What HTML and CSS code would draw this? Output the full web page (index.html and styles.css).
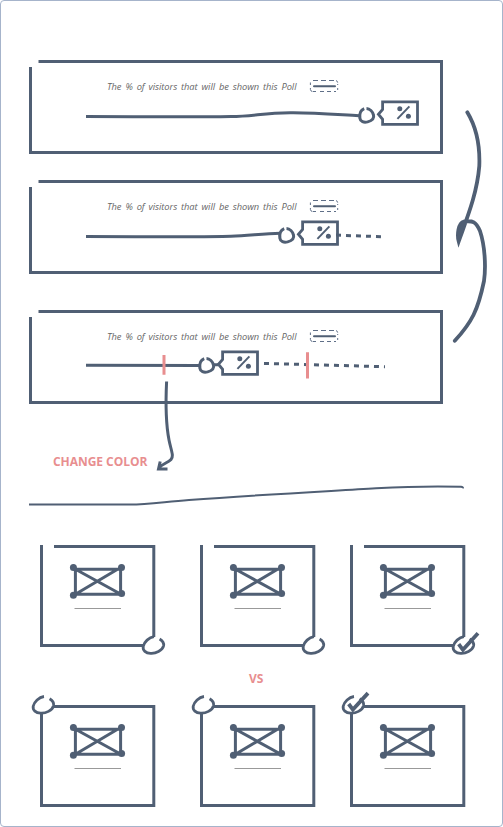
FILE: index.html
```html
<!DOCTYPE html>
<html lang="en">
<head>
<meta charset="utf-8">
<title>Poll visitor slider sketches</title>
<link rel="stylesheet" href="styles.css">
</head>
<body>
<svg class="defs" aria-hidden="true">
  <symbol id="frame" viewBox="0 0 414 94">
    <path class="ink" d="M9.5 1.5H412.5V92.5H1.5V7"/>
  </symbol>
  <symbol id="pill" viewBox="0 0 30 14">
    <path class="pill-dash" d="M4 1.5h5M12 1.5h5M20 1.5h5M4 12.5h3M11 12.5h4M18 12.5h4M25 12.5h2M27 1.6q1.5.3 1.7 2M1.4 3.5v2.5M1.4 9v1.5q.2 1.8 2 2M28.7 5v1M28.7 9v2"/>
    <path class="ink pill-bar" d="M5 7.2H26"/>
  </symbol>
  <symbol id="knob" viewBox="0 0 60 32">
    <path class="ink" d="M5.8 5.6C1.8 7.2 1 11.5 1.5 15.2C2 18.8 5.4 19.7 9.2 18.9C13.2 17.8 16 15.4 15.1 12C14.2 8.9 11.4 5.7 8.1 5.6"/>
    <path class="ink tag" d="M24.2 -1.2H59.1V21.4H24.2V16.3L20 11.2L24.2 6.5Z"/>
    <path class="ink slash" d="M39 15.9L51 3.4"/>
    <circle class="fill" cx="41.4" cy="5.8" r="2.5"/><circle class="fill" cx="50" cy="13.2" r="2.5"/>
  </symbol>
  <symbol id="thumb" viewBox="0 0 56 46">
    <path class="ink" d="M7.4 6.3H52.6V31.3H7.4ZM7 6L52.5 31M7.4 31.3L50 6"/>
    <g class="fill"><circle cx="5.4" cy="4.4" r="3.5"/><circle cx="53.5" cy="4.6" r="3.5"/><circle cx="5.4" cy="32.3" r="3.5"/><circle cx="53.6" cy="30.6" r="3.5"/></g>
    <path class="rule" d="M6.5 45.5H53"/>
  </symbol>
  <symbol id="ring" viewBox="0 0 24 20">
    <path class="ink loop" d="M12.5 1.2C7.5 1.8 2.6 6.5 1.7 11C1.1 15 4.3 17.7 9 17.8C14 18.2 21 15.3 22.1 10.3C22.7 7 20.6 5 18.1 3.5"/>
  </symbol>
  <symbol id="tick" viewBox="0 0 24 20">
    <path class="ink mark" d="M7.2 8.7L11.4 14.3L26.5 -2.2"/>
  </symbol>
</svg>

<main class="board">
  <section class="sliders">
    <article class="slider">
      <svg class="frame"><use href="#frame"/></svg>
      <div class="caption">
        <svg class="label" viewBox="0 0 190 16"><text x="0" y="11" textLength="189.5">The % of visitors that will be shown this Poll</text></svg>
        <svg class="pill"><use href="#pill"/></svg>
      </div>
      <svg class="track" viewBox="0 0 340 34">
        <path class="ink" d="M0 15.5C50 15.5 115 16.3 145 15.6C168 15 178 12.1 204 11.8C227 11.5 250 13.5 273 14.8"/>
        <use href="#knob" x="272.4" y="2" width="60" height="32"/>
      </svg>
    </article>
    <article class="slider">
      <svg class="frame"><use href="#frame"/></svg>
      <div class="caption">
        <svg class="label" viewBox="0 0 190 16"><text x="0" y="11" textLength="189.5">The % of visitors that will be shown this Poll</text></svg>
        <svg class="pill"><use href="#pill"/></svg>
      </div>
      <svg class="track" viewBox="0 0 340 34">
        <path class="ink" d="M0 15.5C50 15.5 115 16.3 145 15.3C164 14.5 178 12.4 194 12.2"/>
        <path class="ink dashes" d="M250 14.1L295 15.7"/>
        <use href="#knob" x="192.4" y="2" width="60" height="32"/>
      </svg>
    </article>
    <article class="slider">
      <svg class="frame"><use href="#frame"/></svg>
      <div class="caption">
        <svg class="label" viewBox="0 0 190 16"><text x="0" y="11" textLength="189.5">The % of visitors that will be shown this Poll</text></svg>
        <svg class="pill"><use href="#pill"/></svg>
      </div>
      <svg class="track" viewBox="0 0 340 34">
        <path class="ink" d="M0 14.2L113 14.6M127 13.7H132"/>
        <path class="ink dashes" d="M178 12.4L299 15.7"/>
        <use href="#knob" x="112.4" y="2" width="60" height="32"/>
        <path class="limit" d="M78 4V23.7M221.5 1.2V27.5"/>
      </svg>
    </article>
  </section>

  <p class="note">CHANGE COLOR</p>
  <svg class="divider" viewBox="0 0 436 22"><path class="ink thin" d="M0 19.5H101C119 19.5 134 17 160 15C230 9.8 300 6.2 347 3.3C380 1.5 404 1 432 1.8Q434.2 2 434 3.3"/></svg>

  <section class="tiles">
    <svg class="tile" viewBox="0 0 116 104">
      <path class="ink" d="M14 1.5H113.8V92M104 100.5H1.5V0"/><use href="#thumb" x="28" y="18" width="56" height="46"/><use href="#ring" x="101.5" y="90.5" width="24" height="20"/>
    </svg>
    <svg class="tile" viewBox="0 0 116 104">
      <path class="ink" d="M14 1.5H113.8V92M104 100.5H1.5V0"/><use href="#thumb" x="28" y="18" width="56" height="46"/><use href="#ring" x="101.5" y="90.5" width="24" height="20"/>
    </svg>
    <svg class="tile" viewBox="0 0 116 104">
      <path class="ink" d="M14 1.5H113.8V92M104 100.5H1.5V0"/><use href="#thumb" x="28" y="18" width="56" height="46"/><use href="#ring" x="101.5" y="90.5" width="24" height="20"/><use href="#tick" x="101.5" y="90.5" width="24" height="20"/>
    </svg>
  </section>
  <p class="versus">VS</p>
  <section class="tiles">
    <svg class="tile" viewBox="0 0 116 104">
      <path class="ink" d="M14 1.5H113.8V100.5H1.5V8"/><use href="#thumb" x="28" y="18" width="56" height="46"/><use href="#ring" x="-8.5" y="-9.7" width="24" height="20"/>
    </svg>
    <svg class="tile" viewBox="0 0 116 104">
      <path class="ink" d="M14 1.5H113.8V100.5H1.5V8"/><use href="#thumb" x="28" y="18" width="56" height="46"/><use href="#ring" x="-8.5" y="-9.7" width="24" height="20"/>
    </svg>
    <svg class="tile" viewBox="0 0 116 104">
      <path class="ink" d="M14 1.5H113.8V100.5H1.5V8"/><use href="#thumb" x="28" y="18" width="56" height="46"/><use href="#ring" x="-8.5" y="-9.7" width="24" height="20"/><use href="#tick" x="-8.5" y="-9.7" width="24" height="20"/>
    </svg>
  </section>

  <svg class="connectors" viewBox="0 0 503 827">
    <path class="ink thick" d="M467.3 112.3C478 130 480 148 479.3 166C477 194 467 218 458.7 241.3C457 235 458 223 464 221.5C473 220.5 476 221.5 480 231C485 246 486 267 484 281C478 310 472 322 454.8 340.8"/>
    <path class="fill" d="M458.7 241L458.7 229L463 222H467Z"/>
    <path class="ink" d="M166.6 381.5C165.7 400 165.5 422 169 440C171.5 452 174 456 171 459.5C168 463 162 463.5 158.5 468.5M160.2 461.5L158.5 469H167.5"/>
  </svg>
</main>
</body>
</html>
```
FILE: styles.css
```css
* { box-sizing: border-box; }
body { margin: 0; background: #fff; }
svg { display: block; overflow: visible; }
symbol { overflow: visible; }
.defs { position: absolute; width: 0; height: 0; }

.board {
  position: relative;
  width: 503px;
  height: 827px;
  padding: 59px 0 0 28px;
  border: 1px solid #a6b4cb;
  border-radius: 4px;
  overflow: hidden;
}

.ink { fill: none; stroke: #505f74; stroke-width: 3; }
.fill { fill: #505f74; }
.tag { stroke-width: 2.8; }
.slash { stroke-width: 2; }
.thin { stroke-width: 2; }
.pill-bar { stroke-width: 2; stroke-linecap: round; }
.pill-dash { fill: none; stroke: #5f6f88; stroke-width: 1; }
.dashes { stroke-dasharray: 5 5; }
.limit { fill: none; stroke: #e88e8f; stroke-width: 3; }
.rule { stroke: #999; stroke-width: 1; }
.loop { stroke-width: 2.8; }
.mark { stroke-width: 3.8; }
.thick { stroke-width: 3.8; stroke-linecap: round; }

.slider { position: relative; width: 414px; height: 94px; padding-top: 19px; }
.slider + .slider { margin-top: 26px; }
.slider:last-child { margin-top: 36px; }
.frame { position: absolute; top: 0; left: 0; width: 414px; height: 94px; }
.caption { display: flex; gap: 12px; padding-left: 78px; height: 16px; }
.label { width: 190px; height: 16px; }
.label text { font: italic 400 9.3px "Open Sans", sans-serif; word-spacing: 1.6px; fill: #666; }
.pill { width: 30px; height: 14px; }
.track { width: 340px; height: 34px; margin: 6px 0 0 57px; }

.note, .versus {
  margin: 0;
  color: #e88e8f;
  font: 700 12px/16px "Open Sans", sans-serif;
}
.note { margin: 50px 0 0 24px; height: 16px; letter-spacing: -0.04px; }
.divider { width: 436px; height: 22px; margin-top: 15px; }

.tiles {
  display: grid;
  grid-template-columns: 160px 150px 116px;
  padding-left: 11px;
  height: 104px;
}
.divider + .tiles { margin-top: 38px; }
.tile { width: 116px; height: 104px; }
.versus { height: 16px; margin: 22px 0 18px 220px; }
.connectors { position: absolute; top: -1px; left: -1px; width: 503px; height: 827px; pointer-events: none; }
```
